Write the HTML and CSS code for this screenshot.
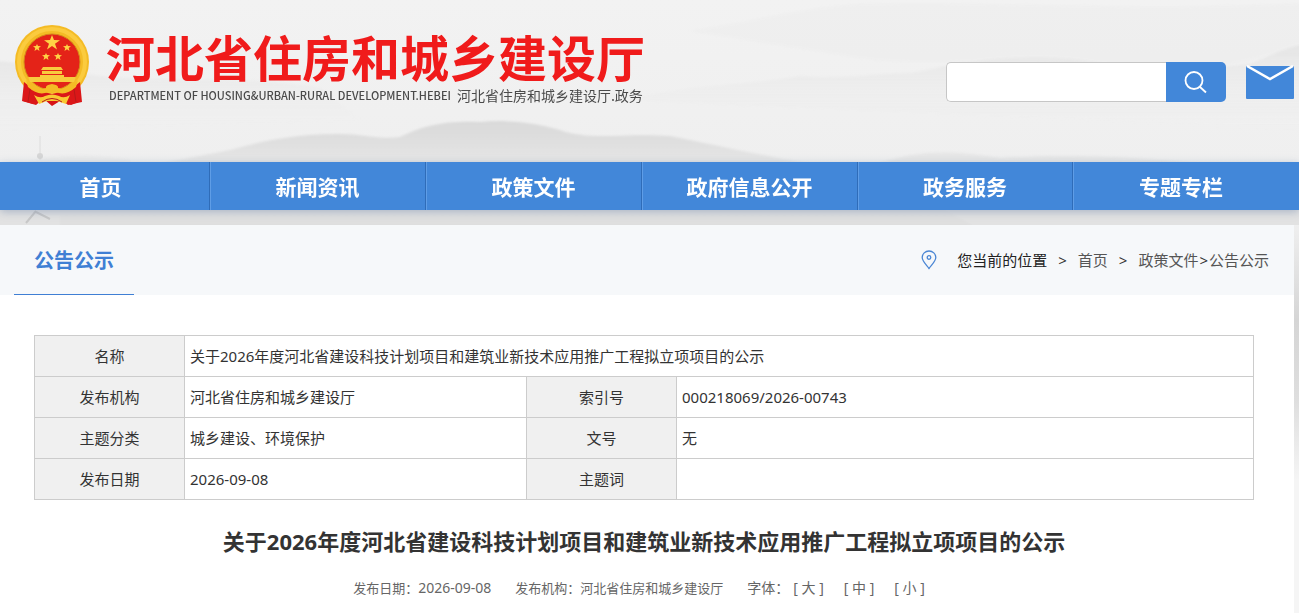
FILE: index.html
```html
<!DOCTYPE html>
<html lang="zh-CN">
<head>
<meta charset="utf-8">
<meta name="viewport" content="width=device-width, initial-scale=1">
<title>关于2026年度河北省建设科技计划项目和建筑业新技术应用推广工程拟立项项目的公示</title>
<link rel="stylesheet" href="styles.css">
</head>
<body>
<header class="header">
  <svg class="scenery" viewBox="0 0 1299 225" preserveAspectRatio="none" aria-hidden="true">
    <defs>
      <linearGradient id="far" x1="0" y1="0" x2="0" y2="1"><stop offset="0" stop-color="#e3e3e3"/><stop offset="1" stop-color="#f0f0f0" stop-opacity="0"/></linearGradient>
      <linearGradient id="near" x1="0" y1="0" x2="0" y2="1"><stop offset="0" stop-color="#d9d9d9"/><stop offset=".4" stop-color="#e6e6e6"/><stop offset="1" stop-color="#dedede"/></linearGradient>
      <filter id="soft"><feGaussianBlur stdDeviation="1"/></filter>
    </defs>
    <g filter="url(#soft)">
      <path fill="url(#far)" opacity=".7" d="M-5 61C30 63 60 72 100 76C160 84 240 74 320 88L360 120L-5 130Z"/>
      <path fill="url(#far)" opacity=".9" d="M630 100C690 84 750 86 800 76C840 80 880 73 912 73C940 68 960 61 1010 58C1080 54 1120 68 1160 74L1250 64C1270 56 1285 47 1305 44V130C1120 120 880 112 630 100Z"/>
      <path fill="#ebebeb" opacity=".4" d="M690 31C760 20 800 8 860 4C980 0 1130 12 1305 3V44C1240 66 1180 76 1120 66C1010 54 930 68 860 58Z"/>
      <path fill="#e2e2e2" d="M-5 206C150 202 240 205 420 200S900 206 1305 203V230H-5Z"/>
      <path fill="url(#near)" d="M60 190C150 164 190 158 230 150C270 139 300 134 335 134C360 133 380 140 400 137C425 125 445 121 480 122C510 119 540 124 560 130C590 141 620 133 670 136C710 144 750 153 800 162C860 176 920 192 980 230H60Z"/>
      <path fill="#eaeaea" d="M30 162Q70 150 130 160V170H30Z"/>
      <path fill="#e6e6e6" d="M880 163C920 150 950 150 1000 158Q1100 152 1200 164Z"/>
    </g>
    <path fill="none" stroke="#dcdcdc" stroke-width="1" d="M40 136V160"/>
    <circle cx="40" cy="156" r="3" fill="#d6d6d6"/>
    <path fill="none" stroke="#c8c8c8" stroke-width="2" d="M36 211L26 223M36 212L50 219"/>
  </svg>
  <div class="masthead">
    <a class="brand" href="#">
      <svg class="emblem" viewBox="0 0 76 82" role="img" aria-label="国徽">
        <path fill="#d61316" d="M11 53L9 76L19 79L31 75L38 81L46 76L57 80L67 76L65 53Z"/>
        <circle cx="38" cy="37" r="37" fill="#f4bb25"/>
        <circle cx="38" cy="37" r="33" fill="none" stroke="#fbcb3e" stroke-width="4"/>
        <circle cx="38" cy="37" r="28" fill="#e42318" stroke="#d5881b"/>
        <path fill="#ffd345" d="M38 10l2 5 6 .3-5 3.5 2 5.7-5-3.5-5 3.5 2-5.7-5-3.5 6-.3ZM23 19l1 2 3 .2-2.3 1.7.8 3-2.5-1.7-2.5 1.7.8-3-2.3-1.7 3-.2ZM53 19l1 2 3 .2-2.3 1.7.8 3-2.5-1.7-2.5 1.7.8-3-2.3-1.7 3-.2ZM32 28l1 2 3 .2-2.3 1.7.8 3-2.5-1.7-2.5 1.7.8-3-2.3-1.7 3-.2ZM44 28l1 2 3 .2-2.3 1.7.8 3-2.5-1.7-2.5 1.7.8-3-2.3-1.7 3-.2Z"/>
        <path fill="#f8cb3e" d="M29 42H47L49 45H27ZM28 46H48V49H28ZM26 50H50V52H62L60 57H16L14 52H26Z"/>
        <path fill="#db1718" d="M10 57Q20 66 30 67L38 69L46 67Q56 66 66 57L68 77L54 80L46 73H30L22 80L8 76Z"/>
        <path fill="#f4bb25" d="M12 55Q24 66 32 63Q31 60 38 59Q45 60 44 63Q52 66 64 55L62 62Q53 70 45 68L38 66L31 68Q23 70 14 62Z"/>
        <path fill="#f9c934" d="M20 70Q26 74 31 71Q38 68 45 71Q50 74 56 70L52 79L43 76H33L25 79Z"/>
        <path fill="none" stroke="#b81918" stroke-width="1" d="M16 64L14 77M60 64L62 77M28 77Q38 70 48 77"/>
      </svg>
      <span class="brand-text">
        <strong class="brand-name">河北省住房和城乡建设厅</strong>
        <span class="brand-sub"><span class="brand-en">DEPARTMENT OF HOUSING&amp;URBAN-RURAL DEVELOPMENT.HEBEI</span><span>河北省住房和城乡建设厅.政务</span></span>
      </span>
    </a>
    <form class="search" role="search">
      <input class="search-input" type="text" aria-label="搜索">
      <button class="search-button" type="button" aria-label="搜索">
        <svg width="24" height="24" viewBox="0 0 24 24" fill="none" stroke="#fff" stroke-width="1.8"><circle cx="10" cy="10.500" r="8.500"/><path d="M16 17L22 22.500"/></svg>
      </button>
    </form>
    <a class="mail" href="#" aria-label="邮箱"><svg width="48" height="34" viewBox="0 0 48 34"><rect y="1" width="48" height="33" rx="1" fill="#4287d9"/><path d="M1 1L24 14L47 1" fill="none" stroke="#fff" stroke-width="2.5"/></svg></a>
  </div>
  <nav class="nav" aria-label="主导航">
    <a href="#">首页</a><a href="#">新闻资讯</a><a href="#">政策文件</a><a href="#">政府信息公开</a><a href="#">政务服务</a><a href="#">专题专栏</a>
  </nav>
</header>
<main class="content">
  <div class="section-bar">
    <h2 class="section-title">公告公示</h2>
    <nav class="crumbs" aria-label="当前位置">
      <svg class="pin" width="16" height="20" viewBox="0 0 16 20" fill="none" stroke="#4a86d4" stroke-width="1.3"><path d="M8 18.500C5 14.500 1.200 11 1.200 7.500A6.800 6.500 0 0 1 14.800 7.500C14.800 11 11 14.500 8 18.500Z"/><circle cx="8" cy="7.500" r="1.800"/></svg>
      <span class="crumb-here">您当前的位置</span><span>&gt;</span><a href="#">首页</a><span>&gt;</span><span class="crumb-tail"><a href="#">政策文件</a><span>&gt;</span><a href="#">公告公示</a></span>
    </nav>
  </div>
  <article class="article">
    <table class="info">
      <colgroup><col class="col-label"><col class="col-mid"><col class="col-label"><col></colgroup>
      <tr><th scope="row">名称</th><td colspan="3">关于2026年度河北省建设科技计划项目和建筑业新技术应用推广工程拟立项项目的公示</td></tr>
      <tr><th scope="row">发布机构</th><td>河北省住房和城乡建设厅</td><th scope="row">索引号</th><td>000218069/2026-00743</td></tr>
      <tr><th scope="row">主题分类</th><td>城乡建设、环境保护</td><th scope="row">文号</th><td>无</td></tr>
      <tr><th scope="row">发布日期</th><td>2026-09-08</td><th scope="row">主题词</th><td></td></tr>
    </table>
    <h1 class="title">关于2026年度河北省建设科技计划项目和建筑业新技术应用推广工程拟立项项目的公示</h1>
    <div class="meta">
      <span>发布日期：<time class="date">2026-09-08</time></span><span>发布机构：河北省住房和城乡建设厅</span>
      <div class="sizes"><span>字体：</span><button type="button">[ 大 ]</button><button type="button">[ 中 ]</button><button type="button">[ 小 ]</button></div>
    </div>
  </article>
</main>
</body>
</html>
```
FILE: styles.css
```css
* { box-sizing: border-box; }
body {
  margin: 0;
  min-height: 100vh;
  display: flex;
  flex-direction: column;
  background: linear-gradient(#efefef 0, #efefef 225px, #d5d5d5 320px, #dedede 400px, #f5f5f5 480px);
  color: #333;
  font: 15px/20px "Noto Sans", "Noto Sans CJK SC", sans-serif;
}
a { color: inherit; text-decoration: none; }

.header {
  position: relative;
  padding-bottom: 15px;
  background: linear-gradient(#f2f2f2, #eee);
}
.scenery {
  position: absolute;
  inset: 0;
  width: 100%;
  height: 100%;
}
.masthead {
  position: relative;
  display: flex;
  align-items: center;
  height: 162px;
  padding: 2px 5px 0 14px;
}
.brand {
  display: flex;
  gap: 16px;
  margin-right: auto;
  padding-bottom: 33px;
}
.emblem { width: 76px; height: 82px; }
.brand-text { display: flex; flex-direction: column; }
.brand-name {
  color: #f01b1b;
  font: bold 49px/62px "Noto Sans CJK SC", sans-serif;
}
.brand-sub {
  display: flex;
  gap: 6px;
  padding-left: 3px;
  color: #4a4a4a;
  font: 14px/16px "Noto Sans CJK SC", sans-serif;
}
.brand-en { font-size: 11px; font-weight: 500; }

.search { display: flex; width: 280px; height: 40px; }
.search-input {
  flex: 1;
  min-width: 0;
  padding: 0 12px;
  border: 1px solid #c6c6c6;
  border-right: 0;
  border-radius: 5px 0 0 5px;
  background: #fff;
  font: inherit;
}
.search-button {
  display: grid;
  place-items: center;
  width: 60px;
  padding: 0;
  border: 0;
  border-radius: 0 5px 5px 0;
  background: #4287d9;
}
.mail { display: flex; margin-left: 20px; }

.nav {
  position: relative;
  display: grid;
  grid-template-columns: 210fr 216fr 216fr 216fr 215fr 216fr;
  padding-right: 10px;
  background: #4287d9;
  box-shadow: 0 2px 8px rgba(70, 100, 150, .35);
  color: #fff;
  font: bold 21px/48px "Noto Sans CJK SC", sans-serif;
  text-align: center;
}
.nav a { border-right: 1px solid #2f6cb8; box-shadow: 1px 0 #5f9de6; }
.nav a:first-child { padding-right: 8px; }
.nav a:last-child { border: 0; box-shadow: none; }

.content {
  flex: 1;
  position: relative;
  margin-right: 5px;
  background: #fff;
}
.section-bar {
  display: flex;
  justify-content: space-between;
  height: 70px;
  padding: 0 25px 0 14px;
  background: #f6f8fa;
}
.section-title {
  margin: 0;
  padding: 0 20px;
  border-bottom: 1px solid #3f7fd4;
  color: #3f7fd4;
  font-size: 20px;
  line-height: 72px;
}
.crumbs {
  display: flex;
  align-items: center;
  gap: 11px;
  color: #333;
}
.crumb-tail { display: flex; gap: 1px; }
.crumbs a { color: #555; }
.crumbs .crumb-here { color: #222; }
.pin { margin-right: 9px; }

.article { padding: 40px 40px 16px 34px; }
.info {
  width: 100%;
  border-collapse: collapse;
  table-layout: fixed;
}
.col-label { width: 150px; }
.col-mid { width: 342px; }
.info th, .info td {
  height: 41px;
  padding: 0 5px;
  border: 1px solid #ccc;
  font-weight: normal;
  text-align: left;
}
.info th { background: #f0f0f0; text-align: center; }
.title {
  margin: 24px 0 0;
  font-size: 22px;
  line-height: 34px;
  text-align: center;
}
.meta {
  display: flex;
  justify-content: center;
  gap: 24px;
  margin-top: 20px;
  padding-right: 10px;
  color: #666;
  font-size: 13px;
}
.date, .sizes { font-size: 14px; }
.sizes { display: flex; gap: 20px; }
.sizes span { margin-right: -16px; }
.sizes button {
  padding: 0;
  border: 0;
  background: none;
  color: inherit;
  font: inherit;
}
```
